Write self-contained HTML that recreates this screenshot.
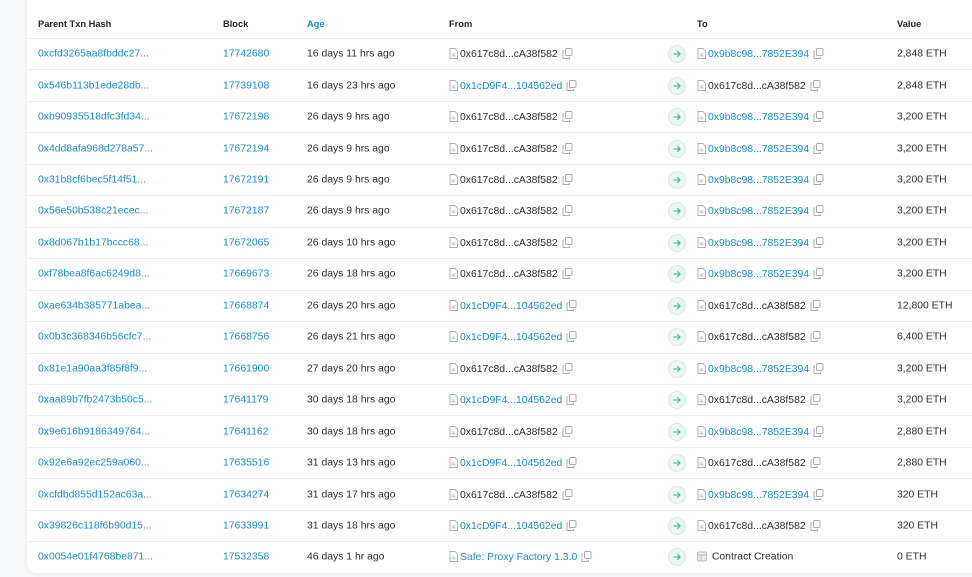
<!DOCTYPE html>
<html><head><meta charset="utf-8"><style>
*{margin:0;padding:0;box-sizing:border-box}
body{width:972px;height:577px;overflow:hidden;background:#f8f9fa;font-family:"Liberation Sans",Arial,sans-serif;font-size:10.4px;color:#2b2f33}
.card{position:absolute;left:27px;top:-12px;width:960px;height:585px;background:#fff;border-radius:10px;box-shadow:0 1px 6px rgba(0,0,0,.06)}
.hd{position:absolute;top:0;left:0;width:972px;height:38px;font-weight:bold;font-size:9.3px;color:#212529}
.r{position:absolute;left:27px;width:945px;height:31.45px;border-top:1px solid #eef0f2}
.c{position:absolute;top:50%;transform:translateY(-50%);white-space:nowrap}
.hd .c{top:24px}
.a{color:#1a8fcc}
.doc{display:inline-block;vertical-align:-2px;margin-right:2px}
.cp{display:inline-block;vertical-align:-2px;margin-left:4px}
.arr{position:absolute;left:641px;top:50%;margin-top:-9px;width:18px;height:18px;border-radius:50%;background:#eaf7f2;border:1px solid #d3efe5}
.arr svg{position:absolute;left:3px;top:3px}
</style></head><body>
<div class="card"></div>
<svg width="0" height="0" style="position:absolute">
<defs>
<symbol id="d" viewBox="0 0 9 11"><path d="M1 .5h5l2.5 2.5v7.5h-7.5z" fill="#fff" stroke="#aab0b6" stroke-width=".9"/><path d="M2.6 6h3.8M2.6 7.8h3.8" stroke="#aab0b6" stroke-width=".8"/></symbol>
<symbol id="k" viewBox="0 0 11 11"><rect x="3.5" y=".5" width="6.5" height="7" rx="1" fill="none" stroke="#aab0b6"/><path d="M2 3H1v7.5h6.5V9" fill="none" stroke="#aab0b6"/></symbol>
<symbol id="g" viewBox="0 0 10 10"><path d="M1.8 5h6.4M5.6 2.6l2.5 2.4-2.5 2.4" fill="none" stroke="#3fb597" stroke-width="1.1" stroke-linecap="round" stroke-linejoin="round"/></symbol>
</defs></svg>
<div class="hd">
<div class="c" style="left:38px">Parent Txn Hash</div>
<div class="c" style="left:223px">Block</div>
<div class="c a" style="left:307px">Age</div>
<div class="c" style="left:449px">From</div>
<div class="c" style="left:697px">To</div>
<div class="c" style="left:897px">Value</div>
</div>

<div class="r" style="top:38px"><div class="c a" style="left:11px">0xcfd3265aa8fbddc27...</div><div class="c a" style="left:196px">17742680</div><div class="c" style="left:280px">16 days 11 hrs ago</div><div class="c" style="left:422px"><svg class="doc" width="9" height="11"><use href="#d"/></svg>0x617c8d...cA38f582<svg class="cp" width="11" height="11"><use href="#k"/></svg></div><div class="arr"><svg width="10" height="10"><use href="#g"/></svg></div><div class="c" style="left:670px"><svg class="doc" width="9" height="11"><use href="#d"/></svg><span class="a">0x9b8c98...7852E394</span><svg class="cp" width="11" height="11"><use href="#k"/></svg></div><div class="c" style="left:870px">2,848 ETH</div></div>

<div class="r" style="top:69.45px"><div class="c a" style="left:11px">0x546b113b1ede28db...</div><div class="c a" style="left:196px">17739108</div><div class="c" style="left:280px">16 days 23 hrs ago</div><div class="c" style="left:422px"><svg class="doc" width="9" height="11"><use href="#d"/></svg><span class="a">0x1cD9F4...104562ed</span><svg class="cp" width="11" height="11"><use href="#k"/></svg></div><div class="arr"><svg width="10" height="10"><use href="#g"/></svg></div><div class="c" style="left:670px"><svg class="doc" width="9" height="11"><use href="#d"/></svg>0x617c8d...cA38f582<svg class="cp" width="11" height="11"><use href="#k"/></svg></div><div class="c" style="left:870px">2,848 ETH</div></div>

<div class="r" style="top:100.9px"><div class="c a" style="left:11px">0xb90935518dfc3fd34...</div><div class="c a" style="left:196px">17672198</div><div class="c" style="left:280px">26 days 9 hrs ago</div><div class="c" style="left:422px"><svg class="doc" width="9" height="11"><use href="#d"/></svg>0x617c8d...cA38f582<svg class="cp" width="11" height="11"><use href="#k"/></svg></div><div class="arr"><svg width="10" height="10"><use href="#g"/></svg></div><div class="c" style="left:670px"><svg class="doc" width="9" height="11"><use href="#d"/></svg><span class="a">0x9b8c98...7852E394</span><svg class="cp" width="11" height="11"><use href="#k"/></svg></div><div class="c" style="left:870px">3,200 ETH</div></div>

<div class="r" style="top:132.35px"><div class="c a" style="left:11px">0x4dd8afa968d278a57...</div><div class="c a" style="left:196px">17672194</div><div class="c" style="left:280px">26 days 9 hrs ago</div><div class="c" style="left:422px"><svg class="doc" width="9" height="11"><use href="#d"/></svg>0x617c8d...cA38f582<svg class="cp" width="11" height="11"><use href="#k"/></svg></div><div class="arr"><svg width="10" height="10"><use href="#g"/></svg></div><div class="c" style="left:670px"><svg class="doc" width="9" height="11"><use href="#d"/></svg><span class="a">0x9b8c98...7852E394</span><svg class="cp" width="11" height="11"><use href="#k"/></svg></div><div class="c" style="left:870px">3,200 ETH</div></div>

<div class="r" style="top:163.8px"><div class="c a" style="left:11px">0x31b8cf6bec5f14f51...</div><div class="c a" style="left:196px">17672191</div><div class="c" style="left:280px">26 days 9 hrs ago</div><div class="c" style="left:422px"><svg class="doc" width="9" height="11"><use href="#d"/></svg>0x617c8d...cA38f582<svg class="cp" width="11" height="11"><use href="#k"/></svg></div><div class="arr"><svg width="10" height="10"><use href="#g"/></svg></div><div class="c" style="left:670px"><svg class="doc" width="9" height="11"><use href="#d"/></svg><span class="a">0x9b8c98...7852E394</span><svg class="cp" width="11" height="11"><use href="#k"/></svg></div><div class="c" style="left:870px">3,200 ETH</div></div>

<div class="r" style="top:195.25px"><div class="c a" style="left:11px">0x56e50b538c21ecec...</div><div class="c a" style="left:196px">17672187</div><div class="c" style="left:280px">26 days 9 hrs ago</div><div class="c" style="left:422px"><svg class="doc" width="9" height="11"><use href="#d"/></svg>0x617c8d...cA38f582<svg class="cp" width="11" height="11"><use href="#k"/></svg></div><div class="arr"><svg width="10" height="10"><use href="#g"/></svg></div><div class="c" style="left:670px"><svg class="doc" width="9" height="11"><use href="#d"/></svg><span class="a">0x9b8c98...7852E394</span><svg class="cp" width="11" height="11"><use href="#k"/></svg></div><div class="c" style="left:870px">3,200 ETH</div></div>

<div class="r" style="top:226.7px"><div class="c a" style="left:11px">0x8d067b1b17bccc68...</div><div class="c a" style="left:196px">17672065</div><div class="c" style="left:280px">26 days 10 hrs ago</div><div class="c" style="left:422px"><svg class="doc" width="9" height="11"><use href="#d"/></svg>0x617c8d...cA38f582<svg class="cp" width="11" height="11"><use href="#k"/></svg></div><div class="arr"><svg width="10" height="10"><use href="#g"/></svg></div><div class="c" style="left:670px"><svg class="doc" width="9" height="11"><use href="#d"/></svg><span class="a">0x9b8c98...7852E394</span><svg class="cp" width="11" height="11"><use href="#k"/></svg></div><div class="c" style="left:870px">3,200 ETH</div></div>

<div class="r" style="top:258.15px"><div class="c a" style="left:11px">0xf78bea8f6ac6249d8...</div><div class="c a" style="left:196px">17669673</div><div class="c" style="left:280px">26 days 18 hrs ago</div><div class="c" style="left:422px"><svg class="doc" width="9" height="11"><use href="#d"/></svg>0x617c8d...cA38f582<svg class="cp" width="11" height="11"><use href="#k"/></svg></div><div class="arr"><svg width="10" height="10"><use href="#g"/></svg></div><div class="c" style="left:670px"><svg class="doc" width="9" height="11"><use href="#d"/></svg><span class="a">0x9b8c98...7852E394</span><svg class="cp" width="11" height="11"><use href="#k"/></svg></div><div class="c" style="left:870px">3,200 ETH</div></div>

<div class="r" style="top:289.6px"><div class="c a" style="left:11px">0xae634b385771abea...</div><div class="c a" style="left:196px">17668874</div><div class="c" style="left:280px">26 days 20 hrs ago</div><div class="c" style="left:422px"><svg class="doc" width="9" height="11"><use href="#d"/></svg><span class="a">0x1cD9F4...104562ed</span><svg class="cp" width="11" height="11"><use href="#k"/></svg></div><div class="arr"><svg width="10" height="10"><use href="#g"/></svg></div><div class="c" style="left:670px"><svg class="doc" width="9" height="11"><use href="#d"/></svg>0x617c8d...cA38f582<svg class="cp" width="11" height="11"><use href="#k"/></svg></div><div class="c" style="left:870px">12,800 ETH</div></div>

<div class="r" style="top:321.05px"><div class="c a" style="left:11px">0x0b3c368346b56cfc7...</div><div class="c a" style="left:196px">17668756</div><div class="c" style="left:280px">26 days 21 hrs ago</div><div class="c" style="left:422px"><svg class="doc" width="9" height="11"><use href="#d"/></svg><span class="a">0x1cD9F4...104562ed</span><svg class="cp" width="11" height="11"><use href="#k"/></svg></div><div class="arr"><svg width="10" height="10"><use href="#g"/></svg></div><div class="c" style="left:670px"><svg class="doc" width="9" height="11"><use href="#d"/></svg>0x617c8d...cA38f582<svg class="cp" width="11" height="11"><use href="#k"/></svg></div><div class="c" style="left:870px">6,400 ETH</div></div>

<div class="r" style="top:352.5px"><div class="c a" style="left:11px">0x81e1a90aa3f85f8f9...</div><div class="c a" style="left:196px">17661900</div><div class="c" style="left:280px">27 days 20 hrs ago</div><div class="c" style="left:422px"><svg class="doc" width="9" height="11"><use href="#d"/></svg>0x617c8d...cA38f582<svg class="cp" width="11" height="11"><use href="#k"/></svg></div><div class="arr"><svg width="10" height="10"><use href="#g"/></svg></div><div class="c" style="left:670px"><svg class="doc" width="9" height="11"><use href="#d"/></svg><span class="a">0x9b8c98...7852E394</span><svg class="cp" width="11" height="11"><use href="#k"/></svg></div><div class="c" style="left:870px">3,200 ETH</div></div>

<div class="r" style="top:383.95px"><div class="c a" style="left:11px">0xaa89b7fb2473b50c5...</div><div class="c a" style="left:196px">17641179</div><div class="c" style="left:280px">30 days 18 hrs ago</div><div class="c" style="left:422px"><svg class="doc" width="9" height="11"><use href="#d"/></svg><span class="a">0x1cD9F4...104562ed</span><svg class="cp" width="11" height="11"><use href="#k"/></svg></div><div class="arr"><svg width="10" height="10"><use href="#g"/></svg></div><div class="c" style="left:670px"><svg class="doc" width="9" height="11"><use href="#d"/></svg>0x617c8d...cA38f582<svg class="cp" width="11" height="11"><use href="#k"/></svg></div><div class="c" style="left:870px">3,200 ETH</div></div>

<div class="r" style="top:415.4px"><div class="c a" style="left:11px">0x9e616b9186349764...</div><div class="c a" style="left:196px">17641162</div><div class="c" style="left:280px">30 days 18 hrs ago</div><div class="c" style="left:422px"><svg class="doc" width="9" height="11"><use href="#d"/></svg>0x617c8d...cA38f582<svg class="cp" width="11" height="11"><use href="#k"/></svg></div><div class="arr"><svg width="10" height="10"><use href="#g"/></svg></div><div class="c" style="left:670px"><svg class="doc" width="9" height="11"><use href="#d"/></svg><span class="a">0x9b8c98...7852E394</span><svg class="cp" width="11" height="11"><use href="#k"/></svg></div><div class="c" style="left:870px">2,880 ETH</div></div>

<div class="r" style="top:446.85px"><div class="c a" style="left:11px">0x92e6a92ec259a060...</div><div class="c a" style="left:196px">17635516</div><div class="c" style="left:280px">31 days 13 hrs ago</div><div class="c" style="left:422px"><svg class="doc" width="9" height="11"><use href="#d"/></svg><span class="a">0x1cD9F4...104562ed</span><svg class="cp" width="11" height="11"><use href="#k"/></svg></div><div class="arr"><svg width="10" height="10"><use href="#g"/></svg></div><div class="c" style="left:670px"><svg class="doc" width="9" height="11"><use href="#d"/></svg>0x617c8d...cA38f582<svg class="cp" width="11" height="11"><use href="#k"/></svg></div><div class="c" style="left:870px">2,880 ETH</div></div>

<div class="r" style="top:478.3px"><div class="c a" style="left:11px">0xcfdbd855d152ac63a...</div><div class="c a" style="left:196px">17634274</div><div class="c" style="left:280px">31 days 17 hrs ago</div><div class="c" style="left:422px"><svg class="doc" width="9" height="11"><use href="#d"/></svg>0x617c8d...cA38f582<svg class="cp" width="11" height="11"><use href="#k"/></svg></div><div class="arr"><svg width="10" height="10"><use href="#g"/></svg></div><div class="c" style="left:670px"><svg class="doc" width="9" height="11"><use href="#d"/></svg><span class="a">0x9b8c98...7852E394</span><svg class="cp" width="11" height="11"><use href="#k"/></svg></div><div class="c" style="left:870px">320 ETH</div></div>

<div class="r" style="top:509.75px"><div class="c a" style="left:11px">0x39826c118f6b90d15...</div><div class="c a" style="left:196px">17633991</div><div class="c" style="left:280px">31 days 18 hrs ago</div><div class="c" style="left:422px"><svg class="doc" width="9" height="11"><use href="#d"/></svg><span class="a">0x1cD9F4...104562ed</span><svg class="cp" width="11" height="11"><use href="#k"/></svg></div><div class="arr"><svg width="10" height="10"><use href="#g"/></svg></div><div class="c" style="left:670px"><svg class="doc" width="9" height="11"><use href="#d"/></svg>0x617c8d...cA38f582<svg class="cp" width="11" height="11"><use href="#k"/></svg></div><div class="c" style="left:870px">320 ETH</div></div>

<div class="r" style="top:541.2px"><div class="c a" style="left:11px">0x0054e01f4768be871...</div><div class="c a" style="left:196px">17532358</div><div class="c" style="left:280px">46 days 1 hr ago</div><div class="c" style="left:422px"><svg class="doc" width="9" height="11"><use href="#d"/></svg><span class="a">Safe: Proxy Factory 1.3.0</span><svg class="cp" width="11" height="11"><use href="#k"/></svg></div><div class="arr"><svg width="10" height="10"><use href="#g"/></svg></div><div class="c" style="left:670px"><svg class="doc" width="10" height="10" viewBox="0 0 10 10"><rect x=".5" y=".5" width="9" height="9" rx="1" fill="#e9ecef" stroke="#aab0b6" stroke-width=".8"/><path d="M1 3.5h8M4 3.5v6" stroke="#aab0b6" stroke-width=".8"/></svg> Contract Creation</div><div class="c" style="left:870px">0 ETH</div></div>
</body></html>
